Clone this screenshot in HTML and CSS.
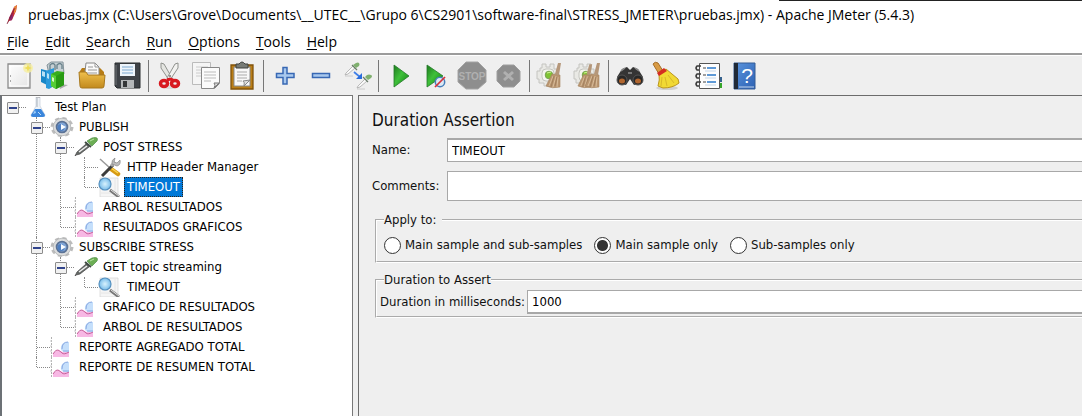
FILE: index.html
```html
<!DOCTYPE html>
<html lang="en">
<head>
<meta charset="utf-8">
<title>Apache JMeter</title>
<link rel="stylesheet" href="styles.css">
</head>
<body>
<svg class="defs" aria-hidden="true">
  <defs>
    <linearGradient id="gGreen" x1="0" y1="0" x2="1" y2="1"><stop offset="0" stop-color="#1c7a1c"/><stop offset=".45" stop-color="#3fc03a"/><stop offset="1" stop-color="#0d7a10"/></linearGradient>
    <linearGradient id="gGold" x1="0" y1="0" x2="0" y2="1"><stop offset="0" stop-color="#efbf4c"/><stop offset="1" stop-color="#c28a1d"/></linearGradient>
    <linearGradient id="gBlue" x1="0" y1="0" x2="1" y2="1"><stop offset="0" stop-color="#5b95de"/><stop offset="1" stop-color="#2d62b4"/></linearGradient>
    <linearGradient id="gPage" x1="0" y1="0" x2="1" y2="1"><stop offset="0" stop-color="#ffffff"/><stop offset="1" stop-color="#e4e4e4"/></linearGradient>
    <radialGradient id="gLens"><stop offset="0" stop-color="#d8f2fd"/><stop offset="1" stop-color="#79bdea"/></radialGradient>
    <symbol id="flask" viewBox="0 0 24 20">
      <path d="M10 0h4v9l5 9q0 2-2 2H7q-2 0-2-2l5-9z" fill="#eef2f6" stroke="#c5cfda" stroke-width=".7"/>
      <path d="M9 12h6l4 6q0 2-2 2H7q-2 0-2-2z" fill="#3a86dc"/><path d="M9 13l-2 4 3-1z" fill="#9fcdf7"/><path d="M10 0h4" stroke="#999"/>
      <path d="M11 1v9" stroke="#9aa4b0" stroke-width=".8"/><path d="M12 15l3 3" stroke="#bfe0fb"/>
    </symbol>
    <symbol id="gear" viewBox="0 0 24 20">
      <ellipse cx="12" cy="10" rx="10" ry="8.500" fill="none" stroke="#bcbcbc" stroke-width="3" stroke-dasharray="4 3.300"/>
      <circle cx="12" cy="10" r="8.800" fill="#dcdddd" stroke="#b0b2b4" stroke-width=".8"/>
      <circle cx="12" cy="10" r="5.400" fill="#7fa6d8" stroke="#5a7296" stroke-width="1.800"/>
      <circle cx="11" cy="10.500" r="3.500" fill="#4f7fc0"/><path d="M11 7l5 3-5 3z" fill="#f7fbff"/>
    </symbol>
    <symbol id="dropper" viewBox="0 0 24 20">
      <path d="M1 19l2-4L12 7l3 3-9 7-4 1z" fill="#666b68" stroke="#444" stroke-width=".7"/>
      <path d="M5 15l8-6" stroke="#f1f1f1" stroke-width="1.500"/>
      <path d="M11 5l6 5" stroke="#3e4a40" stroke-width="2"/>
      <path d="M13 4l5-3q4-1 5 0t0 3l-5 5z" fill="#6cae54" stroke="#4d8d45" stroke-width=".7"/><path d="M16 4l4-2" stroke="#b8e3a4"/>
    </symbol>
    <symbol id="tools" viewBox="0 0 24 20">
      <path d="M2 2l10 9" stroke="#999" stroke-width="1.500"/>
      <path d="M13 12l7 5" stroke="#d79a12" stroke-width="4.500" stroke-linecap="round"/><path d="M13 11l7 5" stroke="#f8d34e" stroke-width="1.500"/>
      <path d="M4 19L15 8" stroke="#3c3c3c" stroke-width="3"/><path d="M13 9l4-4" stroke="#aaa" stroke-width="3"/>
      <path d="M14 7q-1-4 3-6l-1 4 3 1 3-3q1 5-3 6z" fill="#bbb" stroke="#888" stroke-width=".7"/>
    </symbol>
    <symbol id="lens" viewBox="0 0 24 20">
      <path d="M2 1h18v19H2z" fill="#f5f5f5" stroke="#d4d4d4" stroke-width=".7"/><path d="M3 16h16M17 2v14" stroke="#e6e6e6"/>
      <path d="M12 13l9 7" stroke="#777" stroke-width="3"/><path d="M13 13l8 6" stroke="#e5e5e5" stroke-width="1"/>
      <circle cx="7" cy="7" r="6" fill="url(#gLens)" stroke="#5590bf" stroke-width="1.200"/>
    </symbol>
    <symbol id="chart" viewBox="0 0 24 20">
      <path d="M1.500 0v20" stroke="#b0b0b0" stroke-dasharray="2 1"/><path d="M0 4h2M0 9h2M0 14h2" stroke="#ccc"/>
      <path d="M3 16l5-3 5 2 6-1v6H3z" fill="#f7b8e4"/><path d="M11 13q-1-9 8-8v10q-5 1-8-2z" fill="#c5dffb"/>
      <path d="M3 17q3-5 5-4t4 3 7-1" fill="none" stroke="#c6609a" stroke-width="1"/><path d="M12 12q0-7 6-7M13 14h6" fill="none" stroke="#89a8e2" stroke-width="1"/>
    </symbol>
    <symbol id="broomhead" viewBox="0 0 20 28">
      <path d="M13 1l3 0-2 12-4-1z" fill="#b5977a"/><path d="M7 12l8 1 0 12q-8 2-14-1z" fill="#b99570" stroke="#a5835f" stroke-width=".6"/>
      <path d="M8 14L4 24M11 14L8 25M13 15l-1 10" stroke="#d8bc9a"/><path d="M9 14L6 25M12 15l-2 9" stroke="#977556" stroke-width=".7"/>
    </symbol>
    <symbol id="cog" viewBox="0 0 22 24">
      <path d="M6 1h4v3h4V1h4v5h3v5h-3v6h3v3h-5v3H8v-3H3v-4H1V8h3V5h2z" fill="#e9e9e5" stroke="#c4c4c0"/>
      <rect x="6" y="6" width="12" height="12" rx="4" fill="#f5f6f0" stroke="#c5c5c0"/><circle cx="13" cy="12" r="3.800" fill="#7fc433" stroke="#79a354"/><path d="M11 10l4-1" stroke="#d2f594"/>
    </symbol>
  </defs>
</svg>

<div class="window">
  <header class="titlebar">
    <svg class="feather" viewBox="0 0 12 20" aria-hidden="true"><path d="M1 19L3 13 8 2l3-2-1 6-4 9-3 1z" fill="#c52c39"/><path d="M8 2l3-2-1 6-2 3z" fill="#e98535"/><path d="M3 13l3-5 1 4-2 4z" fill="#8a2570"/><path d="M1 19L9 3" stroke="#702039" stroke-width=".7"/></svg>
    <h1 class="title">pruebas.jmx (C:\Users\Grove\Documents\__UTEC__\Grupo 6\CS2901\software-final\STRESS_JMETER\pruebas.jmx) - Apache JMeter (5.4.3)</h1>
  </header>
  <nav class="menubar" aria-label="Main menu">
    <button class="menu"><u>F</u>ile</button><button class="menu"><u>E</u>dit</button><button class="menu"><u>S</u>earch</button><button class="menu"><u>R</u>un</button><button class="menu"><u>O</u>ptions</button><button class="menu"><u>T</u>ools</button><button class="menu"><u>H</u>elp</button>
  </nav>
  <div class="toolbar" role="toolbar" aria-label="Tools">
    <button class="tool" aria-label="New"><svg viewBox="0 0 32 32"><path d="M5 4h22v24H5z" fill="url(#gPage)" stroke="#8c8c8c" stroke-width="1.300"/><path d="M7 6h18v20H7z" fill="none" stroke="#fff"/><path d="M7.500 15v2M7.500 20v2" stroke="#aaa"/><circle cx="25" cy="8" r="5" fill="#f6efa0" opacity=".8"/><path d="M25 4l1 3 3 1-3 1-1 3-1-3-3-1 3-1z" fill="#eddc55"/></svg></button>
    <button class="tool" aria-label="Templates"><svg viewBox="0 0 32 32"><path d="M20 24l9 1-8 4z" fill="#aaa"/><path d="M8 5l4-3h12l1 12-14 4z" fill="#c6d0d4" stroke="#84939a"/><path d="M11 10V5q3-3 5 0v5M18 9V5q3-3 5 0v4" fill="none" stroke="#68808a" stroke-width="1.300"/><path d="M2 9l8 2v15l-8-4z" fill="#1887c8"/><path d="M10 10l5-2v18l-5 3-3-1V11z" fill="#2b9adb"/><path d="M3 11l3 1v5l-3-1zM8 13l2 1v5l-2-1z" fill="#b7e0f5"/><path d="M12 14l6-3 7 1v13l-8 4-5-3z" fill="#37ad1c"/><path d="M12 14l5 2v13l-5-3z" fill="#56ce35"/><path d="M17 16l8-4v13l-8 4z" fill="#289b13"/><path d="M13 17l2 1v4l-2-1z" fill="#d8f8c8"/></svg></button>
    <button class="tool" aria-label="Open"><svg viewBox="0 0 32 32"><path d="M5 11l2-3h18l4 4v15H6z" fill="#b67c16"/><path d="M11 3h9l4 4v13H9z" fill="#fafafa" stroke="#888"/><path d="M20 3v4h4M13 7h5M13 10h9M12 13h10" fill="none" stroke="#999"/><path d="M4 12h7l2 3h17l-1 11q0 2-2 2H7q-2 0-2-2z" fill="url(#gGold)" stroke="#a8791e"/></svg></button>
    <button class="tool" aria-label="Save"><svg viewBox="0 0 32 32"><path d="M4 3h25v25H6l-2-2z" fill="#3e4247" stroke="#292c2f"/><path d="M9 4h15v12H9z" fill="#edf4fa"/><path d="M11 7h11M11 10h11M11 13h11" stroke="#7ca9d1"/><path d="M10 20h13v8H10z" fill="#b4b7b9"/><path d="M12 21h4v6h-4z" fill="#343638"/><path d="M5 5v20" stroke="#72777b"/></svg></button>
    <span class="sep"></span>
    <button class="tool" aria-label="Cut"><svg viewBox="0 0 32 32"><ellipse cx="16" cy="27" rx="7" ry="2" fill="#ddd"/><path d="M7 3l3 1 8 14-3 2L7 8z" fill="#e4e5e1" stroke="#90928e"/><path d="M24 3l-3 1-8 14 3 2 8-12z" fill="#f2f2f0" stroke="#90928e"/><circle cx="16" cy="16" r="1" fill="#777"/><ellipse cx="10" cy="23.500" rx="3.500" ry="3" fill="none" stroke="#d81920" stroke-width="3.500"/><ellipse cx="21" cy="23.500" rx="3.500" ry="3" fill="none" stroke="#d81920" stroke-width="3.500"/><path d="M13 20l3-1 3 1" stroke="#d81920" stroke-width="3" fill="none"/></svg></button>
    <button class="tool" aria-label="Copy"><svg viewBox="0 0 32 32"><path d="M2.500 2.500h18v22h-18z" fill="#f5f5f5" stroke="#bbb"/><path d="M6 7h12M6 10h5M6 13h5M6 16h5" stroke="#ccc"/><path d="M11.500 7.500h18v16l-5 5h-13z" fill="#fbfbfb" stroke="#888"/><path d="M14 12h12M14 15h12M14 18h12M14 21h7" stroke="#bbb"/><path d="M29 23l-5 5q2-3 0-5z" fill="#ddd" stroke="#777"/></svg></button>
    <button class="tool" aria-label="Paste"><svg viewBox="0 0 32 32"><path d="M5 5h22v24H5z" fill="#ba7e17" stroke="#81530b" stroke-width="1.300"/><path d="M8 7h16v19H8z" fill="#f8f8f8" stroke="#8b8b8b"/><path d="M10 7V4h3q3-4 6 0h3v4H10z" fill="#777b76" stroke="#40423f"/><path d="M11 12h10M11 15h10M11 18h10M11 21h5" stroke="#aaa"/><path d="M24 20l-6 6q1-4-1-5z" fill="#ddd" stroke="#888"/></svg></button>
    <span class="sep"></span>
    <button class="tool" aria-label="Expand all"><svg viewBox="0 0 32 32"><path d="M14 7.500h4v6h7v4h-7v6.500h-4V17.500H7.500v-4H14z" fill="#a8c8ee" stroke="#3868b4" stroke-width="1.500"/></svg></button>
    <button class="tool" aria-label="Collapse all"><svg viewBox="0 0 32 32"><path d="M7.500 13.500h17v4h-17z" fill="#a8c8ee" stroke="#3868b4" stroke-width="1.500"/></svg></button>
    <button class="tool" aria-label="Toggle"><svg viewBox="0 0 32 32"><path d="M4 16h8M16 29h8" stroke="#ccc"/><path d="M4 15l1-2 7-7 2 2-7 6z" fill="#fafafa" stroke="#aaa" stroke-width=".8"/><path d="M11 5l5 5" stroke="#6b7d6b" stroke-width="1.300"/><path d="M12 5l3-2q2-1 3 0t0 3l-3 2z" fill="#7fb06e"/><path d="M16 28l1-2 7-7 2 2-7 6z" fill="#fafafa" stroke="#aaa" stroke-width=".8"/><path d="M22 17l5 5" stroke="#6b7d6b" stroke-width="1.300"/><path d="M24 17l2-2q2-1 4 0t0 3l-3 2z" fill="#7fb06e"/><path d="M13 12l6 5" fill="none" stroke="#3f7fe8" stroke-width="1.700"/><path d="M15 19h6v-6z" fill="#2a6ddb"/></svg></button>
    <span class="sep"></span>
    <button class="tool" aria-label="Start"><svg viewBox="0 0 32 32"><path d="M10 5l15 11-15 11z" fill="url(#gGreen)" stroke="#247a29" stroke-width=".8"/></svg></button>
    <button class="tool" aria-label="Start no pauses"><svg viewBox="0 0 32 32"><path d="M7 5l16 11L7 27z" fill="url(#gGreen)" stroke="#247a29" stroke-width=".8"/><circle cx="20" cy="22" r="4.700" fill="#dce9f5" stroke="#477fba" stroke-width="1.500"/><path d="M15 27L25 17" stroke="#d5323b" stroke-width="1.700"/></svg></button>
    <button class="tool" aria-label="Stop" disabled><svg viewBox="0 0 32 32"><path d="M10 2h12l8 8v12l-8 7H10l-8-7V10z" fill="#8e8e8e" stroke="#a4a4a4"/><text class="stop-text" x="16" y="20" text-anchor="middle">STOP</text></svg></button>
    <button class="tool" aria-label="Shutdown" disabled><svg viewBox="0 0 32 32"><path d="M11 5h11l6 6v10l-6 6H11l-6-6V11z" fill="#8e8e8e" stroke="#9e9e9e"/><path d="M12 12l9 8M21 12l-9 8" stroke="#b0b0b0" stroke-width="3"/></svg></button>
    <span class="sep"></span>
    <button class="tool" aria-label="Clear"><svg viewBox="0 0 32 32"><use href="#cog" x="1" y="3" width="22" height="24"/><use href="#broomhead" x="10" y="2" width="20" height="28"/></svg></button>
    <button class="tool" aria-label="Clear all"><svg viewBox="0 0 32 32"><use href="#cog" x="2" y="3" width="22" height="24"/><use href="#broomhead" x="6" y="3" width="19" height="27"/><use href="#broomhead" x="13" y="2" width="20" height="28"/></svg></button>
    <span class="sep"></span>
    <button class="tool" aria-label="Search"><svg viewBox="0 0 32 32"><path d="M3 17l5-8 5-2 3 3 3-3 5 2 5 8-2 6-7 2-4-6-4 6-7-2z" fill="#343434"/><path d="M7 11l4-3M21 8l4 3M14 13h4" stroke="#8d8d8d" stroke-width="1.500"/><ellipse cx="8" cy="20" rx="5" ry="5" fill="#272727" stroke="#555"/><ellipse cx="24" cy="20" rx="5" ry="5" fill="#272727" stroke="#555"/><ellipse cx="8" cy="21" rx="3" ry="2.500" fill="#b1662f"/><ellipse cx="24" cy="21" rx="3" ry="2.500" fill="#b1662f"/></svg></button>
    <button class="tool" aria-label="Reset search"><svg viewBox="0 0 32 32"><ellipse cx="17" cy="28" rx="11" ry="2" fill="#d0d0d0"/><path d="M3 4q2-3 5-1l5 8-4 3z" fill="#d89b45" stroke="#a66e28"/><path d="M9 14l7-5 12 10 1 4q-6 5-16 5l-5-2q2-6 1-12z" fill="#f1d934" stroke="#bb961d"/><path d="M12 17l-1 9M15 17l2 9M18 15l6 8" stroke="#d8b829"/><path d="M7 13l7-5 3 3-8 5z" fill="#d52c21"/></svg></button>
    <span class="gap"></span>
    <button class="tool" aria-label="Function helper"><svg viewBox="0 0 32 32"><path d="M25 17h4v5h-4z" fill="#35618d"/><path d="M25 23h4v5h-4z" fill="#36a629"/><path d="M6.500 3.500h20v25h-20z" fill="#fdfdfd" stroke="#555"/><path d="M10 8h3M10 15h3M10 22h3" stroke="#444"/><path d="M14 8h9M14 15h9M14 22h9" stroke="#2a78c9" stroke-width="1.600"/><path d="M12 11h11M12 18h11M12 25h11" stroke="#c5d7e8"/><path d="M8 6H4q-2 2 0 4h2M8 14H4q-2 2 0 4h2M8 22H4q-2 2 0 4h2" fill="none" stroke="#3a3a3a" stroke-width="1.500"/></svg></button>
    <button class="tool" aria-label="Help"><svg viewBox="0 0 32 32"><path d="M5 3h21v26H5z" fill="url(#gBlue)" stroke="#345d96"/><path d="M5 3h4v26H5z" fill="#202a38"/><path d="M10 27h15" stroke="#c5d5ea"/><text class="help-text" x="18" y="23" text-anchor="middle">?</text></svg></button>
  </div>

  <main class="workspace">
    <section class="tree" aria-label="Test plan tree">
      <ul class="root">
        <li class="node"><div class="row"><button class="toggle" aria-label="Collapse Test Plan"></button><svg class="icon"><use href="#flask"/></svg><span class="label">Test Plan</span></div>
          <ul>
            <li class="node"><div class="row"><button class="toggle" aria-label="Collapse PUBLISH"></button><svg class="icon"><use href="#gear"/></svg><span class="label">PUBLISH</span></div>
              <ul>
                <li class="node"><div class="row"><button class="toggle" aria-label="Collapse POST STRESS"></button><svg class="icon"><use href="#dropper"/></svg><span class="label">POST STRESS</span></div>
                  <ul>
                    <li class="node"><div class="row"><svg class="icon"><use href="#tools"/></svg><span class="label">HTTP Header Manager</span></div></li>
                    <li class="node"><div class="row"><svg class="icon"><use href="#lens"/></svg><span class="label selected">TIMEOUT</span></div></li>
                  </ul>
                </li>
                <li class="node"><div class="row"><svg class="icon"><use href="#chart"/></svg><span class="label">ARBOL RESULTADOS</span></div></li>
                <li class="node"><div class="row"><svg class="icon"><use href="#chart"/></svg><span class="label">RESULTADOS GRAFICOS</span></div></li>
              </ul>
            </li>
            <li class="node"><div class="row"><button class="toggle" aria-label="Collapse SUBSCRIBE STRESS"></button><svg class="icon"><use href="#gear"/></svg><span class="label">SUBSCRIBE STRESS</span></div>
              <ul>
                <li class="node"><div class="row"><button class="toggle" aria-label="Collapse GET topic streaming"></button><svg class="icon"><use href="#dropper"/></svg><span class="label">GET topic streaming</span></div>
                  <ul>
                    <li class="node"><div class="row"><svg class="icon"><use href="#lens"/></svg><span class="label">TIMEOUT</span></div></li>
                  </ul>
                </li>
                <li class="node"><div class="row"><svg class="icon"><use href="#chart"/></svg><span class="label">GRAFICO DE RESULTADOS</span></div></li>
                <li class="node"><div class="row"><svg class="icon"><use href="#chart"/></svg><span class="label">ARBOL DE RESULTADOS</span></div></li>
              </ul>
            </li>
            <li class="node"><div class="row"><svg class="icon"><use href="#chart"/></svg><span class="label">REPORTE AGREGADO TOTAL</span></div></li>
            <li class="node"><div class="row"><svg class="icon"><use href="#chart"/></svg><span class="label">REPORTE DE RESUMEN TOTAL</span></div></li>
          </ul>
        </li>
      </ul>
    </section>
    <section class="detail">
      <h2 class="heading">Duration Assertion</h2>
      <div class="field"><label class="caption" for="name">Name:</label><input class="text name" id="name" type="text" value="TIMEOUT"></div>
      <div class="field"><label class="caption" for="comments">Comments:</label><input class="text comments" id="comments" type="text"></div>
      <fieldset class="group">
        <legend>Apply to:</legend>
        <div class="radios">
          <label class="option"><input type="radio" name="scope">Main sample and sub-samples</label>
          <label class="option"><input type="radio" name="scope" checked>Main sample only</label>
          <label class="option"><input type="radio" name="scope">Sub-samples only</label>
        </div>
      </fieldset>
      <fieldset class="group duration">
        <legend>Duration to Assert</legend>
        <div class="duration-row"><label for="duration">Duration in milliseconds:</label><input class="text millis" id="duration" type="text" value="1000"></div>
      </fieldset>
    </section>
  </main>
</div>
</body>
</html>
```

FILE: styles.css
```css
* { box-sizing: border-box; }
body { margin: 0; background: #efefef; color: #111; font: 13px/20px "DejaVu Sans Condensed", "Noto Sans", sans-serif; }
button { padding: 0; border: 0; background: none; color: inherit; font: inherit; }
ul { margin: 0; padding: 0; list-style: none; }
.defs { position: absolute; width: 0; height: 0; }
.window { display: flex; flex-direction: column; min-height: 100vh; overflow: hidden; }

.titlebar { display: flex; align-items: center; gap: 10px; height: 30px; padding: 0 6px; background: linear-gradient(#222, #222) right top / 28% 1px no-repeat #fff; }
.feather { width: 12px; height: 20px; flex: none; }
.title { margin: 0; font: 14px/24px "Open Sans", sans-serif; color: #000; white-space: nowrap; }
.menubar { display: flex; gap: 16px; height: 25px; padding: 0 7px; background: #fff; border-bottom: 2px solid #9c9c9c; font: 14px/22px "Open Sans", sans-serif; color: #000; }
.menu u { text-decoration-thickness: 1px; text-underline-offset: 2px; }

.toolbar { display: flex; align-items: center; height: 40px; padding-left: 1px; border-top: 1px solid #fff; }
.tool { display: flex; justify-content: center; flex: none; width: 36px; }
.tool svg { width: 32px; height: 32px; }
.sep { flex: none; width: 7px; height: 32px; background: linear-gradient(#777, #777) center / 1px 100% no-repeat; }
.gap { flex: none; width: 7px; }
.stop-text { font: bold 10px "Liberation Sans", sans-serif; fill: #b0b0b0; }
.help-text { font: 21px "Liberation Sans", sans-serif; fill: #fff; }

.workspace { display: flex; flex: 1; }
.tree { flex: none; width: 353px; padding: 1px 0 0 5px; background: #fff; border: 1px solid #777; border-left: 2px solid #6c7176; border-bottom: 0; }
.node { position: relative; }
.node .node { margin-left: 24px; }
.node .node::before { content: ""; position: absolute; left: 5px; top: 0; height: 100%; border-left: 1px dotted #888; }
.node .node:last-child::before { height: 10px; }
.row { position: relative; display: flex; align-items: center; height: 20px; padding-left: 19px; }
.row::before { content: ""; position: absolute; left: 6px; top: 10px; width: 13px; border-top: 1px dotted #888; }
.toggle { position: absolute; left: 0; top: 5px; width: 12px; height: 12px; border: 1px solid #8c8c8c; border-radius: 1px; background: linear-gradient(#31448c, #31448c) center / 8px 2px no-repeat #f1f1f1; }
.icon { position: relative; flex: none; width: 24px; height: 20px; }
.label { margin-left: 2px; padding: 0 2px; border: 1px dotted transparent; line-height: 18px; color: #000; white-space: nowrap; }
.selected { background: #0078d7; border-color: #2b2118; color: #fff; }

.detail { flex: 1; min-width: 0; margin-left: 5px; padding: 12px 0 0 13px; border: 1px solid #6c6c6c; border-right: 0; border-bottom: 0; }
.heading { margin: 0 0 6px; font-size: 17px; line-height: 24px; font-weight: normal; }
.field { display: flex; align-items: center; margin-bottom: 9px; }
.caption { flex: none; width: 75px; }
.text { flex: 1; min-width: 0; padding: 0 4px; border: 1px solid #a8a8a8; border-right: 0; border-radius: 0; background: #fff; color: #000; font: inherit; outline: 0; }
.name { height: 24px; border-top-width: 2px; }
.comments { height: 30px; }
.group { min-width: 0; margin: 0 0 7px 3px; padding: 0 0 0 7px; border: 2px groove #fff; border-right: 0; }
.group legend { padding: 0 6px 0 0; }
.radios { display: flex; gap: 12px; height: 31px; padding-bottom: 1px; }
.option { display: flex; align-items: center; gap: 4px; white-space: nowrap; }
.option input { appearance: none; flex: none; width: 17px; height: 17px; margin: 0; border: 1px solid #333; border-radius: 50%; background: #fff; }
.option input:checked { background: radial-gradient(circle, #333 0 5px, #fff 6px); }
.duration { padding-left: 3px; }
.duration legend { margin-left: 4px; padding: 0; }
.duration-row { display: flex; align-items: center; gap: 2px; padding-bottom: 2px; }
.millis { height: 24px; border-bottom-width: 2px; }
```
